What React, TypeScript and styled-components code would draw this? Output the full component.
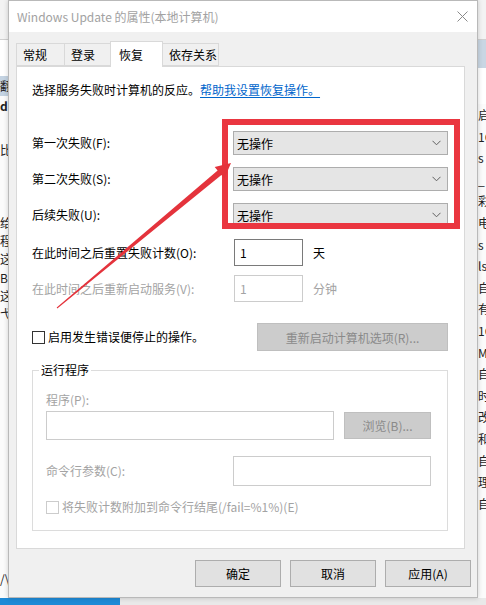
import React from 'react';
import styled, { createGlobalStyle } from 'styled-components';

const GlobalStyle = createGlobalStyle`
  html, body {
    margin: 0;
    padding: 0;
    background: #f3f3f3;
  }
  body {
    font-family: "Noto Sans CJK SC", "Microsoft YaHei", sans-serif;
    font-size: 12px;
    color: #000;
  }
  * {
    box-sizing: border-box;
  }
`;

// Page & background window

const Screen = styled.div`
  position: relative;
  width: 486px;
  height: 605px;
  overflow: hidden;
  display: flex;
  flex-direction: column;
  background: #f3f3f3;
`;

const Desktop = styled.div`
  display: flex;
  height: 598px;
`;

const BgStrip = styled.div`
  width: 8px;
  flex: none;
  overflow: hidden;
  background: #fbfbfb;
  display: flex;
  flex-direction: column;
`;

const BgLine = styled.div<{ $h: number; $bg?: string; $bold?: boolean; $border?: boolean }>`
  height: ${p => p.$h}px;
  line-height: ${p => p.$h}px;
  flex: none;
  white-space: nowrap;
  font-size: 12px;
  color: #222;
  font-weight: ${p => (p.$bold ? 700 : 400)};
  background: ${p => p.$bg || 'transparent'};
  border-bottom: ${p => (p.$border ? '1px solid #d0d0d0' : 'none')};
`;

const Taskbar = styled.div`
  height: 7px;
  display: flex;
  background: #e9e9e9;
`;

const TaskbarApp = styled.div`
  width: 120px;
  background: #1e8ad6;
`;

// Dialog frame

const Dialog = styled.div`
  width: 470px;
  flex: none;
  display: flex;
  flex-direction: column;
  background: #f0f0f0;
  border: 1px solid #b9b9b9;
  box-shadow: 0 0 5px rgba(0, 0, 0, 0.18);
  z-index: 1;
`;

const TitleBar = styled.div`
  height: 31px;
  flex: none;
  background: #fff;
  display: flex;
  align-items: center;
  justify-content: space-between;
  padding: 0 9px 0 8px;
  color: #a2a2a2;
  font-size: 12px;
`;

const Body = styled.div`
  flex: 1;
  display: flex;
  flex-direction: column;
  padding: 9px 12px 0 7px;
`;

const TabStrip = styled.div`
  height: 25px;
  display: flex;
  align-items: flex-end;
  padding-left: 1px;
`;

const Tab = styled.div<{ $w: number; $active?: boolean }>`
  width: ${p => p.$w}px;
  height: ${p => (p.$active ? 26 : 23)}px;
  margin-left: -1px;
  margin-bottom: ${p => (p.$active ? -1 : 0)}px;
  padding-left: ${p => (p.$active ? 8 : 6)}px;
  display: flex;
  align-items: center;
  border: 1px solid #d9d9d9;
  border-bottom: ${p => (p.$active ? 'none' : '1px solid #d9d9d9')};
  background: ${p => (p.$active ? '#fff' : '#f0f0f0')};
  position: relative;
  z-index: ${p => (p.$active ? 2 : 0)};
`;

const Panel = styled.div`
  height: 483px;
  background: #fff;
  border: 1px solid #d9d9d9;
  padding: 15px 16px 0 15px;
  display: flex;
  flex-direction: column;
`;

const Text = styled.div<{ $disabled?: boolean }>`
  line-height: 16px;
  white-space: nowrap;
  color: ${p => (p.$disabled ? '#a3a3a3' : '#000')};
`;

const Link = styled.a`
  color: #0066cc;
  text-decoration: underline;
  text-underline-offset: 2px;
`;

const FailGrid = styled.div`
  margin-top: 33px;
  display: grid;
  grid-template-columns: 201px 215px;
  grid-auto-rows: 24px;
  row-gap: 12px;
  align-items: center;
`;

const Select = styled.div`
  height: 24px;
  display: flex;
  align-items: center;
  justify-content: space-between;
  padding: 0 6px 0 3px;
  background: #e5e5e5;
  border: 1px solid #adadad;
`;

const TimeGrid = styled.div`
  margin-top: 12px;
  display: grid;
  grid-template-columns: 192px 69px auto;
  grid-auto-rows: 27px;
  column-gap: 10px;
  row-gap: 9px;
  align-items: center;
`;

const Input = styled.div<{ $disabled?: boolean; $w?: number; $h?: number }>`
  width: ${p => (p.$w ? `${p.$w}px` : 'auto')};
  height: ${p => p.$h || 27}px;
  padding-left: 5px;
  display: flex;
  align-items: center;
  background: #fff;
  color: ${p => (p.$disabled ? '#a3a3a3' : '#000')};
  border: 1px solid ${p => (p.$disabled ? '#cccccc' : '#7a7a7a')};
`;

const CheckRow = styled.div`
  margin-top: 21px;
  height: 28px;
  display: flex;
  align-items: center;
  justify-content: space-between;
`;

const CheckLabel = styled.label<{ $disabled?: boolean; $top?: number }>`
  display: flex;
  align-items: center;
  gap: 3px;
  margin-top: ${p => p.$top || 0}px;
  line-height: 16px;
  color: ${p => (p.$disabled ? '#a3a3a3' : '#000')};
`;

const Box = styled.span<{ $disabled?: boolean }>`
  width: 13px;
  height: 13px;
  flex: none;
  background: #fff;
  border: 1px solid ${p => (p.$disabled ? '#cccccc' : '#333')};
`;

const Button = styled.div<{ $w: number; $h?: number; $disabled?: boolean }>`
  width: ${p => p.$w}px;
  height: ${p => p.$h || 27}px;
  flex: none;
  display: flex;
  align-items: center;
  justify-content: center;
  background: ${p => (p.$disabled ? '#cccccc' : '#e1e1e1')};
  border: 1px solid ${p => (p.$disabled ? '#bfbfbf' : '#adadad')};
  color: ${p => (p.$disabled ? '#8a8a8a' : '#000')};
`;

const GroupBox = styled.div`
  position: relative;
  margin-top: 19px;
  width: 416px;
  height: 161px;
  border: 1px solid #dcdcdc;
  padding: 21px 14px 0 13px;
  display: flex;
  flex-direction: column;
`;

const Legend = styled.span`
  position: absolute;
  top: -9px;
  left: 6px;
  padding: 0 2px;
  line-height: 16px;
  background: #fff;
`;

const ProgramRow = styled.div`
  margin-top: 3px;
  display: flex;
  align-items: center;
  gap: 10px;
`;

const ArgsRow = styled.div`
  margin-top: 16px;
  display: grid;
  grid-template-columns: 187px 198px;
  align-items: center;
`;

const Buttons = styled.div`
  margin-top: 11px;
  margin-right: -6px;
  display: flex;
  justify-content: flex-end;
  gap: 9px;
`;

// Annotations drawn over the screenshot

const RedBox = styled.div`
  position: absolute;
  left: 222px;
  top: 119px;
  width: 238px;
  height: 110px;
  border: 6px solid #ea3640;
  z-index: 5;
`;

const ArrowLayer = styled.svg`
  position: absolute;
  left: 0;
  top: 0;
  z-index: 6;
  pointer-events: none;
`;

const Chevron = () => (
  <svg width="9" height="6" viewBox="0 0 9 6">
    <polyline points="0.5,0.8 4.5,4.8 8.5,0.8" fill="none" stroke="#606060" strokeWidth="1" />
  </svg>
);

const CloseIcon = () => (
  <svg width="11" height="11" viewBox="0 0 11 11">
    <path d="M0.5 0.5 L10.5 10.5 M10.5 0.5 L0.5 10.5" stroke="#8a8a8a" strokeWidth="1" />
  </svg>
);

const leftLines: { h: number; t?: string; bg?: string; bold?: boolean; border?: boolean }[] = [
  { h: 40, bg: '#f3f3f3', border: true },
  { h: 36, bg: '#fff' },
  { h: 20, t: '翻', bg: '#c4d3e2' },
  { h: 20, t: 'd', bold: true },
  { h: 24 },
  { h: 20, t: '比' },
  { h: 54 },
  { h: 18, t: '给' },
  { h: 18, t: '程' },
  { h: 18, t: '这' },
  { h: 19, t: 'Bc' },
  { h: 18, t: '这' },
  { h: 18, t: '弋' },
  { h: 248 },
  { h: 16, t: '/\\' },
];

const rightChars = ['启', '1C', 's', '_', '彩', '电', 's', 'ls', '自', '有', '1C', 'M', '自', '时', '改', '和', '自', '理', '自'];

const failures = ['第一次失败(F):', '第二次失败(S):', '后续失败(U):'];

// arrow from the reset row up to the red frame
const arrowPoints = '57.3,308.4 221.4,175 224.4,178.4 231,163 214.7,167 217.6,170.4 56.7,307.6';

export default function App() {
  return (
    <>
      <GlobalStyle />
      <Screen>
        <Desktop>
          <BgStrip>
            {leftLines.map((l, i) => (
              <BgLine key={i} $h={l.h} $bg={l.bg} $bold={l.bold} $border={l.border}>{l.t}</BgLine>
            ))}
          </BgStrip>

          <Dialog>
            <TitleBar>
              <span>Windows Update 的属性(本地计算机)</span>
              <CloseIcon />
            </TitleBar>
            <Body>
              <TabStrip>
                <Tab $w={49}>常规</Tab>
                <Tab $w={47}>登录</Tab>
                <Tab $w={53} $active>恢复</Tab>
                <Tab $w={57}>依存关系</Tab>
              </TabStrip>
              <Panel>
                <Text>
                  选择服务失败时计算机的反应。<Link>帮助我设置恢复操作。</Link>
                </Text>

                <FailGrid>
                  {failures.map(label => (
                    <React.Fragment key={label}>
                      <Text>{label}</Text>
                      <Select>
                        <span>无操作</span>
                        <Chevron />
                      </Select>
                    </React.Fragment>
                  ))}
                </FailGrid>

                <TimeGrid>
                  <Text>在此时间之后重置失败计数(O):</Text>
                  <Input>1</Input>
                  <Text>天</Text>
                  <Text $disabled>在此时间之后重新启动服务(V):</Text>
                  <Input $disabled>1</Input>
                  <Text $disabled>分钟</Text>
                </TimeGrid>

                <CheckRow>
                  <CheckLabel>
                    <Box />
                    启用发生错误便停止的操作。
                  </CheckLabel>
                  <Button $w={191} $h={28} $disabled>重新启动计算机选项(R)...</Button>
                </CheckRow>

                <GroupBox>
                  <Legend>运行程序</Legend>
                  <Text $disabled>程序(P):</Text>
                  <ProgramRow>
                    <Input $disabled $w={288} $h={29} />
                    <Button $w={87} $disabled>浏览(B)...</Button>
                  </ProgramRow>
                  <ArgsRow>
                    <Text $disabled>命令行参数(C):</Text>
                    <Input $disabled $h={30} />
                  </ArgsRow>
                  <CheckLabel $disabled $top={13}>
                    <Box $disabled />
                    将失败计数附加到命令行结尾(/fail=%1%)(E)
                  </CheckLabel>
                </GroupBox>
              </Panel>

              <Buttons>
                <Button $w={86}>确定</Button>
                <Button $w={86}>取消</Button>
                <Button $w={86}>应用(A)</Button>
              </Buttons>
            </Body>
          </Dialog>

          <BgStrip>
            <BgLine $h={40} $bg="#f3f3f3" $border />
            <BgLine $h={28} $bg="#c9d6e3" />
            <BgLine $h={36} $bg="#fff" />
            {rightChars.map((c, i) => (
              <BgLine key={i} $h={21.6}>{c}</BgLine>
            ))}
          </BgStrip>
        </Desktop>
        <Taskbar>
          <TaskbarApp />
        </Taskbar>

        <RedBox />
        <ArrowLayer width="486" height="605" viewBox="0 0 486 605">
          <polygon points={arrowPoints} fill="#e4333c" />
        </ArrowLayer>
      </Screen>
    </>
  );
}
